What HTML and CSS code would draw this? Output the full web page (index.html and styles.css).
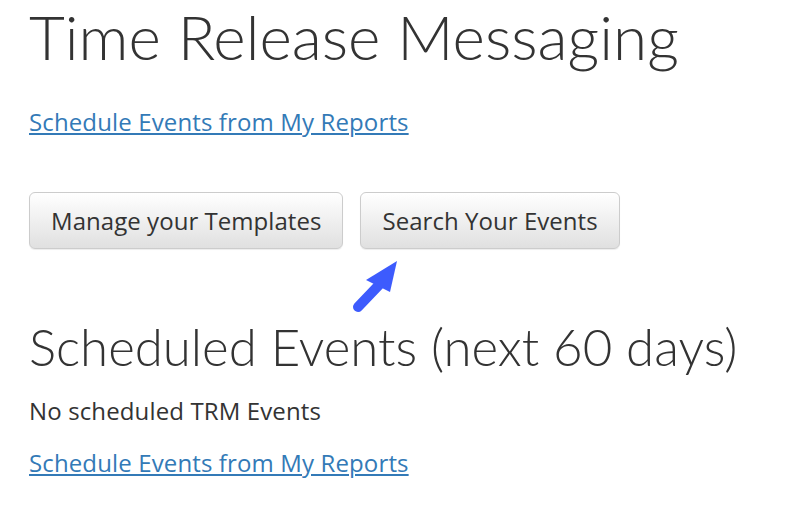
FILE: index.html
```html
<!DOCTYPE html>
<html>
<head>
<meta charset="utf-8">
<link rel="stylesheet" href="styles.css">
</head>
<body>
<div class="page">
  <h1 class="title">Time Release Messaging</h1>
  <p class="link-row"><a href="#" class="link">Schedule Events from My Reports</a></p>
  <div class="actions">
    <button class="btn">Manage your Templates</button>
    <div class="btn-wrap">
      <button class="btn">Search Your Events</button>
      <svg class="arrow" width="60" height="60" viewBox="0 0 60 60">
        <line x1="9" y1="47" x2="30" y2="25" stroke="#3d5bfd" stroke-width="10" stroke-linecap="round"/>
        <polygon points="48,1 17,20 41,32" fill="#3d5bfd"/>
      </svg>
    </div>
  </div>
  <h2 class="subtitle">Scheduled Events (next 60 days)</h2>
  <p class="note">No scheduled TRM Events</p>
  <p class="link-row2"><a href="#" class="link">Schedule Events from My Reports</a></p>
</div>
</body>
</html>
```
FILE: styles.css
```css
html, body {
  margin: 0;
  padding: 0;
  background: #fff;
}
.page {
  padding: 0 0 0 29px;
  font-family: "Open Sans", sans-serif;
  font-size: 24px;
  letter-spacing: 0.13px;
  color: #333;
}
.title {
  font-family: Lato, sans-serif;
  font-weight: 300;
  font-size: 62px;
  line-height: 72px;
  letter-spacing: 0;
  margin: 0;
  color: #333;
}
.link-row {
  margin: 34px 0 0 0;
  line-height: 32px;
}
.link {
  color: #337ab7;
  text-decoration: underline;
}
.actions {
  display: flex;
  gap: 17px;
  margin-top: 54px;
}
.btn-wrap {
  position: relative;
}
.btn {
  font-family: "Open Sans", sans-serif;
  font-size: 24px;
  letter-spacing: 0.05px;
  color: #333;
  height: 57px;
  padding: 0 21px;
  border: 1px solid #ccc;
  border-radius: 6px;
  background: linear-gradient(to bottom, #fff 0, #e0e0e0 100%);
  box-shadow: inset 0 1px 0 rgba(255,255,255,.15), 0 1px 1px rgba(0,0,0,.075);
}
.arrow {
  position: absolute;
  left: -11px;
  top: 68px;
}
.subtitle {
  font-family: Lato, sans-serif;
  font-weight: 300;
  font-size: 51px;
  line-height: 60px;
  letter-spacing: 0;
  margin: 68px 0 0 0;
  color: #333;
}
.note {
  margin: 18px 0 0 0;
  line-height: 32px;
}
.link-row2 {
  margin: 20px 0 0 0;
  line-height: 32px;
}
```
